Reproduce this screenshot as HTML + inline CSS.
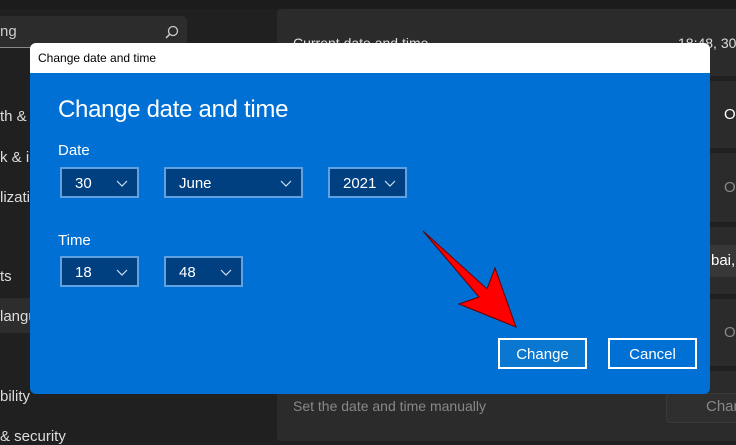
<!DOCTYPE html>
<html><head><meta charset="utf-8"><style>
*{margin:0;padding:0;box-sizing:border-box}
body{width:736px;height:437px;background:#202020;position:relative;overflow:hidden;font-family:"Liberation Sans",sans-serif;color:#fff}
.a{position:absolute;white-space:nowrap}
.card{position:absolute;left:277px;width:470px;background:#2b2b2b;border-radius:4px}
.dd{position:absolute;background:#003f80;border:2px solid #5ea2e4;font-size:15px;color:#fff;padding:6px 0 0 13px}
.dd svg{position:absolute;right:9px;top:11px}
.btn{position:absolute;border:2px solid #fff;font-size:15px;text-align:center;line-height:29px}
.side{font-size:15px;color:#ddd}
</style></head><body>
<div class="a" style="left:0;top:0;width:736px;height:9px;background:#1c1c1c"></div>
<div class="a" style="left:0;top:16px;width:187px;height:32px;background:#2c2c2c;border-radius:0 5px 5px 0;border-bottom:1px solid #888"></div>
<div class="a side" style="left:0;top:23px;color:#ccc">ng</div>
<svg class="a" style="left:165px;top:25px" width="14" height="14" viewBox="0 0 14 14"><circle cx="8" cy="6" r="4.5" fill="none" stroke="#ccc" stroke-width="1.3"/><path d="M4.8 9.2 1 13" stroke="#ccc" stroke-width="1.5"/></svg>
<div class="a side" style="left:0;top:108px">th &amp;</div>
<div class="a side" style="left:0;top:149px">k &amp; i</div>
<div class="a side" style="left:0;top:189px">lizati</div>
<div class="a side" style="left:0;top:268px">ts</div>
<div class="a" style="left:0;top:298px;width:40px;height:35px;background:#2d2d2d"></div>
<div class="a side" style="left:0;top:308px">langu</div>
<div class="a side" style="left:0;top:388px">bility</div>
<div class="a side" style="left:0;top:428px">&amp; security</div>

<div class="card" style="top:9px;height:67px"></div>
<div class="a" style="left:293px;top:35px;font-size:14px;color:#ddd">Current date and time</div>
<div class="a" style="left:678px;top:35px;font-size:14px;color:#ddd">18:48, 30</div>
<div class="card" style="top:81px;height:67px"></div>
<div class="a" style="left:724px;top:106px;font-size:15px">O</div>
<div class="card" style="top:153px;height:69px"></div>
<div class="a" style="left:724px;top:179px;font-size:15px;color:#888">O</div>
<div class="card" style="top:227px;height:67px"></div>
<div class="a" style="left:705px;top:245px;width:40px;height:32px;background:#373737;border-radius:4px"></div>
<div class="a" style="left:711px;top:252px;font-size:15px">bai,</div>
<div class="card" style="top:299px;height:67px"></div>
<div class="a" style="left:724px;top:324px;font-size:15px;color:#888">O</div>
<div class="card" style="top:371px;height:70px"></div>
<div class="a" style="left:293px;top:398px;font-size:14px;color:#888">Set the date and time manually</div>
<div class="a" style="left:666px;top:393px;width:80px;height:30px;background:#2f2f2f;border:1px solid #3a3a3a;border-radius:4px"></div>
<div class="a" style="left:706px;top:398px;font-size:15px;color:#888">Char</div>

<div class="a" style="left:30px;top:43px;width:680px;height:351px;background:#0070d4;border-radius:6px;overflow:hidden">
 <div class="a" style="left:0;top:0;width:680px;height:30px;background:#fff;color:#000;font-size:12px;padding:8px 0 0 8px">Change date and time</div>
 <div class="a" style="left:28px;top:53px;font-size:24px;letter-spacing:-0.3px">Change date and time</div>
 <div class="a" style="left:28px;top:99px;font-size:15px">Date</div>
 <div class="a" style="left:28px;top:189px;font-size:15px">Time</div>
</div>
<div class="dd" style="left:60px;top:167px;width:79px;height:31px">30<svg width="12" height="8"><path d="M1 1l5 5 5-5" fill="none" stroke="#cfe0f5" stroke-width="1.2"/></svg></div>
<div class="dd" style="left:164px;top:167px;width:139px;height:31px">June<svg width="12" height="8"><path d="M1 1l5 5 5-5" fill="none" stroke="#cfe0f5" stroke-width="1.2"/></svg></div>
<div class="dd" style="left:328px;top:167px;width:79px;height:31px">2021<svg width="12" height="8"><path d="M1 1l5 5 5-5" fill="none" stroke="#cfe0f5" stroke-width="1.2"/></svg></div>
<div class="dd" style="left:60px;top:256px;width:79px;height:31px">18<svg width="12" height="8"><path d="M1 1l5 5 5-5" fill="none" stroke="#cfe0f5" stroke-width="1.2"/></svg></div>
<div class="dd" style="left:164px;top:256px;width:79px;height:31px">48<svg width="12" height="8"><path d="M1 1l5 5 5-5" fill="none" stroke="#cfe0f5" stroke-width="1.2"/></svg></div>
<div class="btn" style="left:498px;top:338px;width:89px;height:31px;background:#0a78d0">Change</div>
<div class="btn" style="left:608px;top:338px;width:89px;height:31px">Cancel</div>
<svg class="a" style="left:0;top:0" width="736" height="437"><polygon points="423,231 487,289 495,268 516,327 459,304 479,297" fill="#f00" stroke="#600" stroke-width="1"/></svg>
</body></html>
